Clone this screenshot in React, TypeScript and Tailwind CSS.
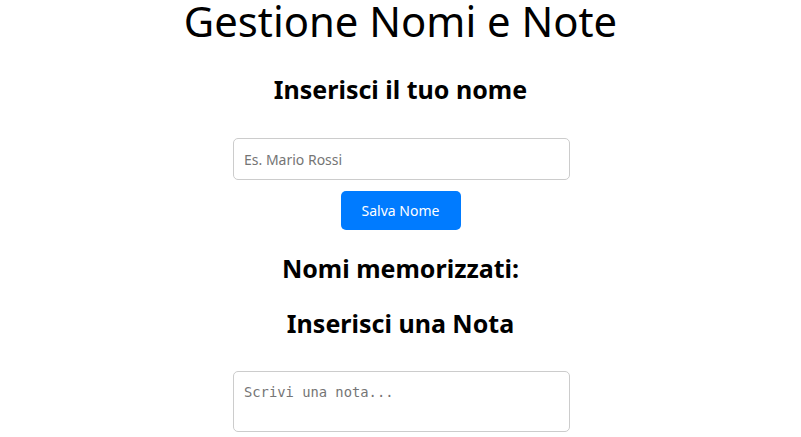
export default function App() {
  return (
    <div className="min-h-screen bg-white font-['Noto_Sans',sans-serif] text-black flex flex-col items-center">
      <h1 className="text-[41.8px] leading-[42px] font-normal">Gestione Nomi e Note</h1>

      <h2 className="mt-[31px] text-[25px] leading-[33px] font-bold">Inserisci il tuo nome</h2>

      <input
        type="text"
        placeholder="Es. Mario Rossi"
        className="mt-[32px] ml-[2px] w-[337px] h-[42px] px-[10px] border border-[#cccccc] rounded-[5px] text-[14px] placeholder:text-[#757575] outline-none"
      />
      <button className="mt-[11px] w-[120px] h-[39px] bg-[#007bff] text-white text-[14px] rounded-[5px]">
        Salva Nome
      </button>

      <h2 className="mt-[22px] text-[25px] leading-[33px] font-bold">Nomi memorizzati:</h2>

      <h2 className="mt-[22px] text-[25px] leading-[33px] font-bold">Inserisci una Nota</h2>

      <textarea
        placeholder="Scrivi una nota..."
        className="mt-[31px] ml-[2px] w-[337px] h-[61px] p-[10px] border border-[#cccccc] rounded-[5px] resize-none font-['DejaVu_Sans_Mono',monospace] text-[13.8px] placeholder:text-[#757575] outline-none"
      />
    </div>
  );
}
